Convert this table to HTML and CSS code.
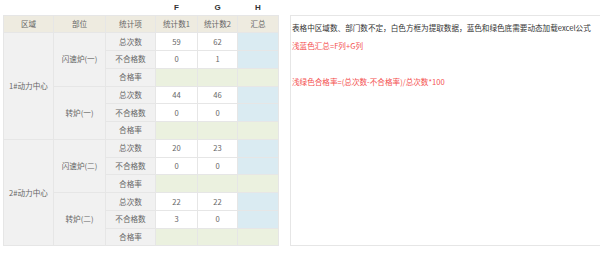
FILE: index.html
```html
<!DOCTYPE html>
<html>
<head>
<meta charset="utf-8">
<link rel="stylesheet" href="styles.css">
</head>
<body>
<div class="page">
  <table class="grid">
    <colgroup>
      <col class="c1"><col class="c2"><col class="c3"><col class="c4"><col class="c5"><col class="c6">
    </colgroup>
    <tr class="letters"><td></td><td></td><td></td><td>F</td><td>G</td><td>H</td></tr>
    <tr class="head"><td>区域</td><td>部位</td><td>统计项</td><td>统计数1</td><td>统计数2</td><td>汇总</td></tr>
    <tr><td class="lab" rowspan="6">1#动力中心</td><td class="lab" rowspan="3">闪速炉(一)</td><td class="lab">总次数</td><td>59</td><td>62</td><td class="blue"></td></tr>
    <tr><td class="lab">不合格数</td><td>0</td><td>1</td><td class="blue"></td></tr>
    <tr><td class="lab">合格率</td><td class="green"></td><td class="green"></td><td class="green"></td></tr>
    <tr><td class="lab" rowspan="3">转炉(一)</td><td class="lab">总次数</td><td>44</td><td>46</td><td class="blue"></td></tr>
    <tr><td class="lab">不合格数</td><td>0</td><td>0</td><td class="blue"></td></tr>
    <tr><td class="lab">合格率</td><td class="green"></td><td class="green"></td><td class="green"></td></tr>
    <tr><td class="lab" rowspan="6">2#动力中心</td><td class="lab" rowspan="3">闪速炉(二)</td><td class="lab">总次数</td><td>20</td><td>23</td><td class="blue"></td></tr>
    <tr><td class="lab">不合格数</td><td>0</td><td>0</td><td class="blue"></td></tr>
    <tr><td class="lab">合格率</td><td class="green"></td><td class="green"></td><td class="green"></td></tr>
    <tr><td class="lab" rowspan="3">转炉(二)</td><td class="lab">总次数</td><td>22</td><td>22</td><td class="blue"></td></tr>
    <tr><td class="lab">不合格数</td><td>3</td><td>0</td><td class="blue"></td></tr>
    <tr><td class="lab">合格率</td><td class="green"></td><td class="green"></td><td class="green"></td></tr>
  </table>
  <div class="note">
    <p class="dark">表格中区域数、部门数不定，白色方框为提取数据，蓝色和绿色底需要动态加载excel公式</p>
    <p class="red">浅蓝色汇总=F列+G列</p>
    <p class="red">&nbsp;</p>
    <p class="red">浅绿色合格率=(总次数-不合格率)/总次数*100</p>
  </div>
</div>
</body>
</html>
```
FILE: styles.css
```css
html, body {
  margin: 0;
  padding: 0;
  background: #fff;
  overflow: hidden;
}
body {
  font-family: "Noto Sans CJK SC", "Noto Sans", sans-serif;
  font-size: 7.6px;
  color: #666;
}
.page {
  display: flex;
  align-items: flex-start;
  padding-left: 3px;
  width: 620px;
}
.grid {
  border-collapse: collapse;
  table-layout: fixed;
  width: 275px;
  flex: none;
}
.c1 { width: 50px; }
.c2 { width: 52px; }
.c3 { width: 50px; }
.c4 { width: 42px; }
.c5 { width: 40px; }
.c6 { width: 41px; }
.grid td {
  border: 1px solid #e6e6e6;
  height: 16.77px;
  padding: 0;
  text-align: center;
  vertical-align: middle;
  line-height: 10px;
  white-space: nowrap;
}
.grid .letters td {
  border: none;
  height: 15px;
  font-weight: bold;
  color: #333;
  font-family: "Liberation Sans", "Noto Sans", sans-serif;
  font-size: 8px;
  vertical-align: top;
  padding-top: 3px;
  box-sizing: border-box;
}
.grid .head td {
  background: #eeebe0;
}
.grid td.lab {
  background: #f1f1f1;
}
.grid td.blue {
  background: #daebf2;
}
.grid td.green {
  background: #ebf1df;
}
.note {
  flex: none;
  width: 340px;
  margin-left: 11px;
  margin-top: 15px;
  height: 229px;
  border: 1px solid #e6e6e6;
  padding: 3px 0 0 1px;
  box-sizing: border-box;
  height: 231px;
}
.note p {
  margin: 0;
  line-height: 18px;
  white-space: nowrap;
}
.note .dark {
  color: #333;
}
.note .red {
  color: #f4504f;
}
```
